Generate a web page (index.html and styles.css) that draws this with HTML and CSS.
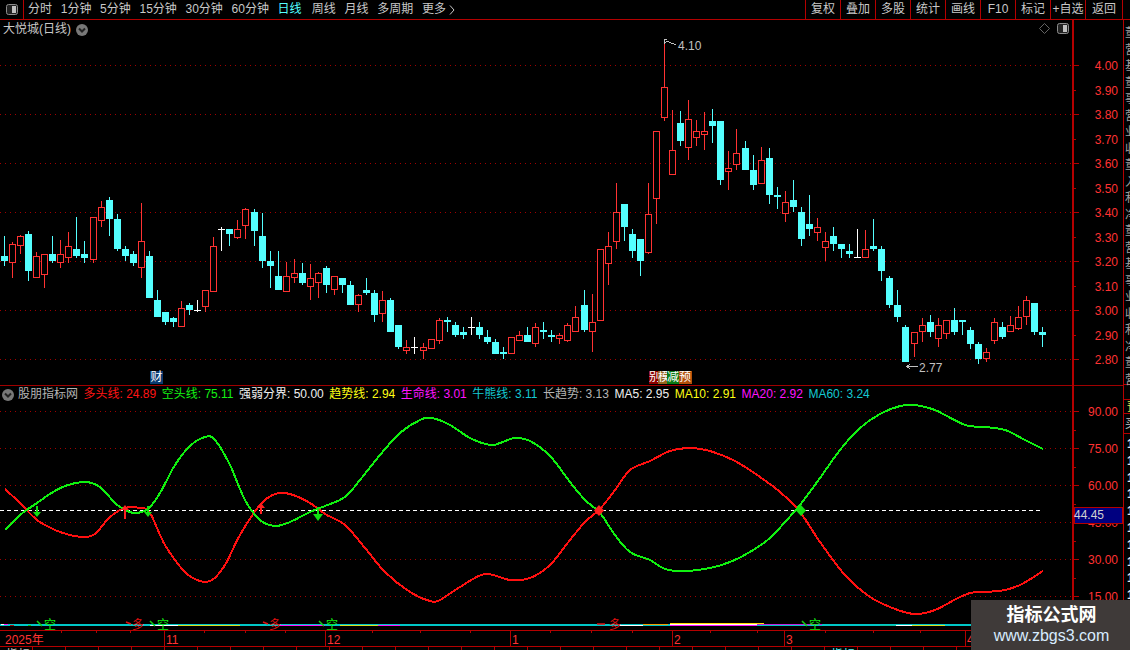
FILE: index.html
```html
<!DOCTYPE html>
<html lang="zh-CN">
<head>
<meta charset="utf-8">
<title>大悦城 日线</title>
<link rel="stylesheet" href="styles.css">
</head>
<body>
<div class="app">
  <header class="toolbar">
    <div class="toggle-cell">
      <svg class="toggle-icon" viewBox="0 0 12 11"><rect x="0.5" y="0.5" width="11" height="10" rx="2" class="toggle-frame"/><rect x="6" y="2" width="4" height="7" class="toggle-fill"/></svg>
    </div>
    <nav class="tabs">
      <span>分时</span><span>1分钟</span><span>5分钟</span><span>15分钟</span><span>30分钟</span><span>60分钟</span>
      <span class="tab-active">日线</span><span>周线</span><span>月线</span><span>多周期</span><span class="tab-more">更多 <svg class="more-arrow" viewBox="0 0 6 10"><path d="M1 0.500L5 5L1 9.500"/></svg></span>
    </nav>
    <nav class="buttons">
      <span>复权</span><span>叠加</span><span>多股</span><span>统计</span><span>画线</span><span>F10</span><span>标记</span><span class="btn-wide">+自选</span><span class="btn-wide">返回</span>
    </nav>
  </header>

  <div class="workspace">
    <div class="panels">
      <section class="panel kline">
        <svg class="canvas" viewBox="0 20 1123 365" width="1123" height="365">
          <path class="grid" d="M0 65.5H1072M0 114.5H1072M0 163.5H1072M0 212.5H1072M0 261.5H1072M0 310.5H1072M0 359.5H1072"/>
          <g id="candles"></g>
          <rect class="axis-bar" x="1072" y="20" width="2" height="365"/>
          <path class="tick-line" d="M1074 65.5h5M1074 90.5h2M1074 114.5h5M1074 139.5h2M1074 163.5h5M1074 188.5h2M1074 212.5h5M1074 237.5h2M1074 261.5h5M1074 286.5h2M1074 310.5h5M1074 335.5h2M1074 359.5h5"/>
          <g class="axis-labels">
            <text x="1118" y="70">4.00</text><text x="1118" y="95">3.90</text><text x="1118" y="119">3.80</text>
            <text x="1118" y="144">3.70</text><text x="1118" y="168">3.60</text><text x="1118" y="193">3.50</text>
            <text x="1118" y="217">3.40</text><text x="1118" y="242">3.30</text><text x="1118" y="266">3.20</text>
            <text x="1118" y="291">3.10</text><text x="1118" y="315">3.00</text><text x="1118" y="340">2.90</text>
            <text x="1118" y="364">2.80</text>
          </g>
          <path class="note-line" d="M664.500 44V39.500H667M664.500 42.500L668 41.500L672 43.500L676 44.500M918 366.500H907M910 364L907 366.500L910 369"/>
          <text class="note-text" x="678" y="50">4.10</text>
          <text class="note-text" x="919" y="372">2.77</text>
        </svg>
        <div class="chart-title">
          <span>大悦城(日线)</span>
          <svg class="chevron" viewBox="0 0 12 12"><circle cx="6" cy="6" r="6" class="chevron-disc"/><path d="M3 4.500L6 7.500L9 4.500" class="chevron-mark"/></svg>
        </div>
        <div class="chart-tools">
          <svg class="diamond" viewBox="0 0 11 11"><path d="M5.500 0.500L10.500 5.500L5.500 10.500L0.500 5.500Z"/></svg>
          <svg class="toggle-icon" viewBox="0 0 12 11"><rect x="0.5" y="0.5" width="11" height="10" rx="2" class="toggle-frame"/><rect x="6" y="2" width="4" height="7" class="toggle-fill"/></svg>
        </div>
        <div class="badge badge-cai">财</div>
        <div class="badge badge-row">
          <span class="cell-a">别</span><span class="cell-b">模</span><span class="cell-c">减</span><span class="cell-d">预</span>
        </div>
      </section>

      <section class="panel indicator">
        <svg class="canvas" viewBox="0 385 1123 245" width="1123" height="245">
          <path class="grid" d="M0 411.500H1072M0 448.500H1072M0 485.500H1072M0 522.500H1072M0 559.500H1072M0 596.500H1072"/>
          <path class="center-line" d="M0 510.500H1043"/>
          <path id="bull" class="curve curve-red"/>
          <path id="bear" class="curve curve-green"/>
          <g class="mark-green">
            <path d="M36 506h2v6h3l-4 5l-4-5h3z"/>
            <path d="M147 506h2v6h3l-4 5l-4-5h3z"/>
            <path d="M317 507h2v7h4l-5 7l-5-7h4z"/>
            <path d="M801 505l5 5.500l-5 5.500l-5-5.500z"/>
          </g>
          <g class="mark-red">
            <path d="M125 505l4 5h-3v9h-2v-9h-3z"/>
            <path d="M261 503l4 5h-3v6h-2v-6h-3z"/>
            <path d="M599 505l5 5.500l-5 5.500l-5-5.500z"/>
          </g>
          <g id="strip"></g>
          <g class="strip-marks">
            <text class="strip-green" x="44" y="629">空</text>
            <text class="strip-green" x="157" y="629">空</text>
            <text class="strip-green" x="326" y="629">空</text>
            <text class="strip-green" x="809" y="629">空</text>
            <text class="strip-red" x="132" y="629">多</text>
            <text class="strip-red" x="269" y="629">多</text>
            <text class="strip-red" x="609" y="629">多</text>
            <path class="arrow-green" d="M37 621L42 626M150 621L155 626M319 621L324 626M802 621L807 626"/>
            <path class="arrow-red" d="M131 624L126 622M268 624L263 622M605 624L597 624"/>
          </g>
          <rect class="axis-bar" x="1072" y="385" width="2" height="245"/>
          <path class="tick-line" d="M1074 411.500h5M1074 430.500h2M1074 448.500h5M1074 467.500h2M1074 485.500h5M1074 504.500h2M1074 522.500h5M1074 541.500h2M1074 559.500h5M1074 578.500h2M1074 596.500h5"/>
          <g class="axis-labels">
            <text x="1118" y="416">90.00</text><text x="1118" y="453">75.00</text><text x="1118" y="490">60.00</text>
            <text x="1118" y="527">45.00</text><text x="1118" y="564">30.00</text><text x="1118" y="601">15.00</text>
          </g>
          <rect class="cursor-box" x="1074.500" y="507.500" width="48" height="16"/>
          <text class="cursor-text" x="1074" y="519">44.45</text>
        </svg>
        <div class="legend">
          <svg class="chevron" viewBox="0 0 12 12"><circle cx="6" cy="6" r="6" class="chevron-disc"/><path d="M3 4.500L6 7.500L9 4.500" class="chevron-mark"/></svg>
          <span class="legend-name">股朋指标网</span>
          <span class="c-red">多头线: 24.89</span>
          <span class="c-green">空头线: 75.11</span>
          <span class="c-white">强弱分界: 50.00</span>
          <span class="c-yellow">趋势线: 2.94</span>
          <span class="c-magenta">生命线: 3.01</span>
          <span class="c-teal">牛熊线: 3.11</span>
          <span class="c-grey">长趋势: 3.13</span>
          <span class="c-white">MA5: 2.95</span>
          <span class="c-yellow">MA10: 2.91</span>
          <span class="c-magenta">MA20: 2.92</span>
          <span class="c-teal">MA60: 3.24</span>
        </div>
      </section>

      <footer class="dates">
        <svg class="canvas" viewBox="0 630 1123 16" width="1123" height="16">
          <path class="date-tick" d="M61.500 630v3M96.500 630v3M130.500 630v3M204.500 630v3M245.500 630v3M285.500 630v3M372.500 630v3M420.500 630v3M470.500 630v3M550.500 630v3M591.500 630v3M632.500 630v3M710.500 630v3M757.500 630v3M825.500 630v3M873.500 630v3M920.500 630v3"/>
          <path class="date-major" d="M164.500 630v16M325.500 630v16M510.500 630v16M672.500 630v16M784.500 630v16M965.500 630v16"/>
          <text class="date-text" x="5" y="644">2025年</text>
          <text class="date-text" x="166" y="644">11</text>
          <text class="date-text" x="327" y="644">12</text>
          <text class="date-text" x="512" y="644">1</text>
          <text class="date-text" x="674" y="644">2</text>
          <text class="date-text" x="786" y="644">3</text>
          <text class="date-text" x="967" y="644">4</text>
        </svg>
      </footer>
      <div class="tabbar">
        <span>指标</span><span></span><span></span><span></span><span></span><span></span><span></span><span></span><span></span><span></span><span></span><span></span><span></span><span></span><span></span><span></span><span></span><span></span><span></span><span></span><span></span><span></span><span></span><span></span><span></span><span class="tab-cyan">指标</span><span></span><span></span><span></span>
      </div>
    </div>

    <aside class="side">
      <div class="side-top">
        <span>董</span><span>营</span><span>基</span><span>董</span><span>事</span><span>营</span><span>业</span><span>收</span><span>董</span><span>入</span><span>利</span><span>净</span><span>董</span><span>营</span><span>基</span><span>事</span><span>业</span><span>收</span><span>利</span><span>净</span><span>董</span><span>营</span>
      </div>
      <div class="side-flag">预</div>
      <div class="side-head">买</div>
      <div class="side-list">
        <span>1</span><span>1</span><span>1</span><span>1</span><span>1</span><span>1</span><span>1</span><span>1</span><span>1</span><span>1</span><span>1</span><span>1</span>
      </div>
    </aside>
  </div>

  <div class="watermark">
    <strong>指标公式网</strong>
    <span>www.zbgs3.com</span>
  </div>
</div>
<script src="chart.js"></script>
</body>
</html>
```

FILE: styles.css
```css
* { box-sizing: border-box; }
html, body { margin: 0; padding: 0; background: #000; }
body {
  width: 1130px;
  height: 650px;
  overflow: hidden;
  font-family: "Liberation Sans", "Noto Sans CJK SC", sans-serif;
  font-size: 12px;
  color: #c8c8c8;
}
.app { position: relative; width: 1130px; height: 650px; overflow: hidden; }

/* toolbar */
.toolbar {
  display: flex;
  height: 20px;
  border-bottom: 1px solid #b40000;
  line-height: 19px;
}
.toggle-cell {
  width: 24px;
  border-right: 1px solid #b40000;
  display: flex;
  align-items: center;
  justify-content: center;
}
.toggle-icon { width: 12px; height: 11px; display: block; }
.toggle-frame { fill: #222; stroke: #8c8c8c; stroke-width: 1; }
.toggle-fill { fill: #c0c0c0; }
.tabs { display: flex; gap: 8.7px; padding-left: 4px; flex: 1; }
.tab-active { color: #54ffff; margin-right: 1.5px; }
.tab-more { display: flex; align-items: center; gap: 3px; }
.more-arrow { width: 6px; height: 10px; display: block; }
.more-arrow path { fill: none; stroke: #c8c8c8; stroke-width: 1; }
.buttons { display: flex; margin-right: 7px; border-left: 1px solid #b40000; }
.buttons span {
  width: 35px;
  text-align: center;
  border-right: 1px solid #b40000;
}
.buttons .btn-wide { width: 35px; white-space: nowrap; }
.buttons span:last-child { width: 37px; }

/* layout */
.workspace { display: flex; height: 630px; }
.panels { width: 1123px; flex: none; display: flex; flex-direction: column; }
.side { width: 7px; flex: none; overflow: hidden; border-left: 1px solid #b40000; }
.panel { position: relative; }
.kline { height: 365px; }
.indicator { height: 245px; border-top: 1px solid #a00000; }
.indicator .canvas { margin-top: -1px; }
.canvas { display: block; }

/* chart shapes */
.grid { fill: none; stroke: #a00000; stroke-width: 1; stroke-dasharray: 1 4; shape-rendering: crispEdges; }
.axis-bar { fill: #b40000; }
.tick-line { fill: none; stroke: #b40000; stroke-width: 1; shape-rendering: crispEdges; }
.axis-labels text { fill: #ff3232; font-size: 12px; text-anchor: end; }
.candle-cyan { fill: #54ffff; }
.candle-red { fill: #ff3232; }
.candle-hollow { fill: #000; stroke: #ff3232; stroke-width: 1; }
.candle-white { fill: #fff; }
.note-line { fill: none; stroke: #c0c0c0; stroke-width: 1; shape-rendering: crispEdges; }
.note-text { fill: #c0c0c0; font-size: 12px; }

.chart-title {
  position: absolute;
  left: 3px;
  top: 1px;
  display: flex;
  align-items: center;
  gap: 5px;
  line-height: 17px;
}
.chevron { width: 12px; height: 12px; flex: none; display: block; }
.chevron-disc { fill: #787878; }
.chevron-mark { fill: none; stroke: #222; stroke-width: 2; }
.chart-tools {
  position: absolute;
  right: 54px;
  top: 3px;
  display: flex;
  align-items: center;
  gap: 7px;
}
.diamond { width: 11px; height: 11px; display: block; }
.diamond path { fill: none; stroke: #646464; stroke-width: 1; }

.badge { position: absolute; color: #fff; line-height: 13px; height: 13px; }
.badge-cai { left: 150px; top: 351px; width: 13px; background: #0a3a70; text-align: center; }
.badge-row { left: 649px; top: 351px; display: flex; width: 43px; overflow: hidden; }
.badge-row span { display: block; white-space: nowrap; }
.cell-a { width: 9px; background: #8c0000; }
.cell-b { width: 9px; background: #96641e; }
.cell-c { width: 12px; background: #0a7a14; }
.cell-d { width: 13px; background: #b4500a; }

/* indicator */
.center-line { fill: none; stroke: #fff; stroke-width: 1; stroke-dasharray: 4 3; shape-rendering: crispEdges; }
.curve { fill: none; stroke-width: 2; shape-rendering: crispEdges; }
.curve-red { stroke: #ff1010; }
.curve-green { stroke: #10f010; }
.mark-green { fill: #10e010; }
.mark-red { fill: #ff2020; }
.strip-marks text { font-size: 12px; }
.strip-green { fill: #10f010; }
.strip-red { fill: #e01010; }
.arrow-green { fill: none; stroke: #10d010; stroke-width: 1.5; }
.arrow-red { fill: none; stroke: #e01010; stroke-width: 1.5; }
.cursor-box { fill: #000080; stroke: #b40000; stroke-width: 1; }
.cursor-text { fill: #d0d0d0; font-size: 12px; }

.legend {
  position: absolute;
  left: 2px;
  top: 0;
  display: flex;
  align-items: center;
  gap: 5.5px;
  line-height: 17px;
  white-space: nowrap;
}
.legend-name { margin-left: -1.500px; color: #b4b4b4; }
.c-red { color: #ff1414; }
.c-green { color: #14f014; }
.c-white { color: #f0f0f0; }
.c-yellow { color: #ffff14; }
.c-magenta { color: #ff14ff; }
.c-teal { color: #14c8d2; }
.c-grey { color: #b4b4b4; }

/* dates */
.dates { border-top: 1px solid #b40000; height: 16px; position: relative; overflow: hidden; }
.dates .canvas { margin-top: -1px; }
.date-tick { fill: none; stroke: #b40000; stroke-width: 1; shape-rendering: crispEdges; }
.date-major { fill: none; stroke: #b40000; stroke-width: 1; shape-rendering: crispEdges; }
.date-text { fill: #ff3232; font-size: 12px; }

.tabbar {
  height: 4px;
  overflow: hidden;
  border-top: 1px solid #b40000;
  display: flex;
  color: #c8c8c8;
  line-height: 16px;
}
.tabbar span { width: 33px; height: 4px; border-right: 1px solid #b40000; padding-left: 6px; flex: none; }
.tabbar .tab-cyan { color: #54ffff; }

/* right sliver */
.side-top {
  height: 365px;
  padding-top: 5px;
  padding-left: 1px;
  display: flex;
  flex-direction: column;
  color: #a0a0a0;
  line-height: 16.500px;
  border-bottom: 1px solid #b40000;
}
.side-top span { display: block; width: 14px; }
.side-flag { height: 15px; margin-top: 14px; color: #e6e650; line-height: 15px; padding-left: 3px; border-top: 1px solid #b40000; border-bottom: 1px solid #b40000; }
.side-head { height: 20px; color: #c8c8c8; line-height: 20px; padding-left: 1px; border-bottom: 1px solid #b40000; }
.side-list { display: flex; flex-direction: column; padding-left: 3px; color: #e6e6e6; line-height: 16.800px; font-weight: bold; padding-top: 2px; }
.side-list span { display: block; }

/* watermark */
.watermark {
  position: absolute;
  left: 971px;
  top: 600px;
  width: 159px;
  height: 50px;
  background: #3f3a39;
  display: flex;
  flex-direction: column;
  align-items: center;
  padding-left: 2px;
}
.watermark strong { color: #fff; font-size: 18px; line-height: 22px; margin-top: 4px; font-weight: bold; }
.watermark span { color: #d8ecff; font-size: 16px; line-height: 20px; }
```

FILE: chart.js
```js
// each row: top of wick, bottom of wick, top of body, bottom of body, kind
// kind: c = falling (solid cyan), r = rising (hollow red), w = flat (white cross)
var CANDLES = [
  [236,266,256,261,'c'],[242,278,244,262,'r'],[235,254,236,245,'r'],[231,281,234,271,'c'],[252,278,256,277,'r'],
  [254,288,254,274,'r'],[236,263,254,261,'c'],[240,268,254,262,'r'],[232,263,246,257,'r'],[217,258,249,256,'c'],
  [241,263,254,258,'c'],[217,263,217,259,'r'],[201,227,207,220,'r'],[197,236,200,219,'c'],[214,251,219,249,'c'],
  [246,261,249,256,'c'],[251,266,254,263,'c'],[203,278,241,267,'r'],[251,298,256,298,'c'],[290,317,300,317,'c'],
  [312,325,312,322,'c'],[317,327,318,322,'c'],[301,327,308,326,'r'],[303,315,305,310,'c'],[300,312,310,310,'w'],
  [290,312,290,306,'r'],[237,291,246,291,'r'],[227,251,229,229,'w'],[229,246,229,234,'c'],[220,239,229,237,'r'],
  [208,239,209,225,'r'],[209,246,212,231,'c'],[213,268,236,261,'c'],[251,288,261,266,'c'],[251,290,276,290,'c'],
  [262,291,276,291,'r'],[259,283,273,277,'r'],[263,285,273,283,'c'],[264,300,278,286,'r'],[272,298,273,282,'r'],
  [266,293,268,285,'c'],[276,295,276,289,'r'],[278,293,278,285,'c'],[281,305,285,305,'c'],[294,312,295,304,'r'],
  [278,295,290,293,'c'],[290,322,293,315,'c'],[291,322,300,313,'r'],[298,332,300,332,'c'],[325,349,325,347,'c'],
  [340,354,347,350,'r'],[337,354,347,347,'w'],[343,359,347,350,'r'],[339,348,339,348,'r'],[318,344,320,340,'r'],
  [317,332,320,322,'c'],[322,337,325,335,'c'],[327,339,332,335,'c'],[317,335,327,327,'w'],[322,339,327,335,'c'],
  [330,344,337,342,'c'],[339,354,342,354,'c'],[347,359,352,354,'c'],[337,353,337,353,'r'],[331,340,335,340,'r'],
  [327,342,335,342,'c'],[323,347,327,343,'r'],[322,339,330,332,'c'],[330,342,335,337,'c'],[333,344,335,338,'r'],
  [323,342,325,340,'r'],[306,332,317,331,'r'],[290,332,305,330,'c'],[294,352,322,331,'r'],[249,320,249,320,'r'],
  [232,285,246,263,'r'],[183,249,212,241,'r'],[204,241,204,227,'c'],[229,258,234,251,'c'],[239,276,239,261,'c'],
  [183,254,214,252,'r'],[131,224,131,198,'r'],[43,121,87,117,'r'],[110,174,150,174,'r'],[111,146,123,141,'c'],
  [100,160,119,147,'r'],[120,146,131,137,'r'],[112,150,131,134,'r'],[109,143,121,126,'c'],[121,185,121,180,'c'],
  [151,190,168,171,'r'],[129,170,153,164,'r'],[141,170,148,170,'c'],[155,190,170,185,'c'],[147,183,160,183,'r'],
  [148,204,158,195,'c'],[187,209,195,197,'c'],[191,222,202,213,'r'],[180,212,200,207,'c'],[207,246,212,239,'c'],
  [195,236,224,229,'c'],[218,241,227,232,'r'],[232,261,241,247,'r'],[227,251,236,244,'c'],[244,258,244,249,'c'],
  [244,258,251,254,'c'],[229,258,257,257,'w'],[230,258,249,257,'r'],[219,251,246,249,'c'],[246,281,249,271,'c'],
  [276,308,278,305,'c'],[290,322,305,317,'c'],[325,362,327,362,'c'],[332,357,332,343,'r'],[318,342,325,331,'r'],
  [315,337,322,332,'c'],[318,347,325,338,'r'],[320,339,320,333,'r'],[308,335,320,332,'c'],[320,335,320,322,'c'],
  [327,349,330,344,'c'],[342,364,344,359,'c'],[348,362,352,358,'r'],[318,344,322,340,'r'],[322,339,327,337,'c'],
  [316,332,325,331,'r'],[306,330,317,328,'r'],[296,325,300,316,'r'],[303,335,303,332,'c'],[327,347,332,335,'c']
];

var BULL = [[5,489],[20,503],[37,520],[55,530],[70,535],[85,537],[95,534],[110,517],[125,508],[140,508],[150,513],[165,545],[185,572],[200,581],[212,580],[225,565],[240,535],[260,505],[275,494],[290,494],[310,503],[325,514],[345,525],[365,548],[385,572],[410,592],[430,601],[440,600],[460,587],[485,574],[510,580],[530,578],[550,565],[570,540],[585,522],[600,509],[615,490],[630,470],[650,461],[670,451],[690,448],[710,451],[735,461],[760,477],[780,492],[800,512],[820,542],[845,575],[870,597],[895,609],[915,614],[935,610],[960,597],[975,592],[1000,591],[1020,585],[1043,571]];

var BEAR = [[5,530],[20,515],[37,503],[50,494],[65,486],[85,482],[100,487],[115,503],[125,510],[135,513],[148,509],[160,493],[175,465],[190,446],[205,437],[215,440],[230,465],[245,500],[260,520],[275,526],[290,522],[310,512],[325,506],[345,497],[360,480],[380,455],[400,433],[420,420],[432,418],[450,425],[470,438],[490,445],[500,443],[515,438],[530,441],[550,456],[570,482],[585,500],[600,513],[615,535],[630,552],[650,560],[665,569],[685,571],[710,568],[730,562],[750,552],[770,538],[785,522],[800,505],[820,478],[840,450],[860,428],[880,414],[900,406],[915,405],[935,410],[965,425],[985,427],[1005,430],[1025,440],[1043,449]];

// from x, to x, y, colour of each short run along the base strip
var STRIP = [
  [0,1072,624,'#00c8c8'],[0,1072,625,'#00c8c8'],
  [1,4,624,'#ffffff'],[4,8,624,'#ff14ff'],[10,14,625,'#a01010'],[28,31,625,'#10c010'],
  [150,178,625,'#ffffff'],[178,240,625,'#d8e020'],[280,325,625,'#ff14ff'],[340,378,625,'#d8e020'],[378,400,625,'#ff14ff'],
  [620,643,625,'#ffffff'],[643,668,624,'#f0a000'],[670,757,625,'#ff14ff'],[670,757,624,'#ffffff'],[670,764,623,'#ffe000'],
  [757,822,624,'#c020e0'],[880,896,625,'#10c0a0'],[896,912,625,'#ffffff'],[912,945,625,'#d8e020']
];

var SVG_NS = 'http://www.w3.org/2000/svg';

function rect(parent, cls, x, y, w, h) {
  var r = document.createElementNS(SVG_NS, 'rect');
  r.setAttribute('class', cls);
  r.setAttribute('x', x);
  r.setAttribute('y', y);
  r.setAttribute('width', w);
  r.setAttribute('height', h);
  r.setAttribute('shape-rendering', 'crispEdges');
  parent.appendChild(r);
  return r;
}

function drawCandles() {
  var g = document.getElementById('candles');
  CANDLES.forEach(function (c, i) {
    var x = Math.round(4 + i * 8.049);
    var hi = c[0], lo = c[1], top = c[2], bot = c[3], kind = c[4];
    if (kind === 'c') {
      rect(g, 'candle-cyan', x, hi, 1, lo - hi);
      rect(g, 'candle-cyan', x - 3, top, 7, Math.max(bot - top, 2));
    } else if (kind === 'w') {
      rect(g, 'candle-white', x, hi, 1, lo - hi);
      rect(g, 'candle-white', x - 3, top, 7, 1);
    } else {
      rect(g, 'candle-red', x, hi, 1, lo - hi);
      rect(g, 'candle-hollow', x - 2.5, top + 0.5, 6, Math.max(bot - top, 2));
    }
  });
}

function smooth(points) {
  var d = 'M' + points[0][0] + ' ' + points[0][1];
  for (var i = 0; i < points.length - 1; i++) {
    var p0 = points[i - 1] || points[i];
    var p1 = points[i];
    var p2 = points[i + 1];
    var p3 = points[i + 2] || p2;
    d += 'C' + (p1[0] + (p2[0] - p0[0]) / 6) + ' ' + (p1[1] + (p2[1] - p0[1]) / 6) +
         ' ' + (p2[0] - (p3[0] - p1[0]) / 6) + ' ' + (p2[1] - (p3[1] - p1[1]) / 6) +
         ' ' + p2[0] + ' ' + p2[1];
  }
  return d;
}

function drawStrip() {
  var g = document.getElementById('strip');
  STRIP.forEach(function (s) {
    var r = rect(g, '', s[0], s[2], s[1] - s[0], 1);
    r.style.fill = s[3];
  });
}

drawCandles();
document.getElementById('bull').setAttribute('d', smooth(BULL));
document.getElementById('bear').setAttribute('d', smooth(BEAR));
drawStrip();
```
